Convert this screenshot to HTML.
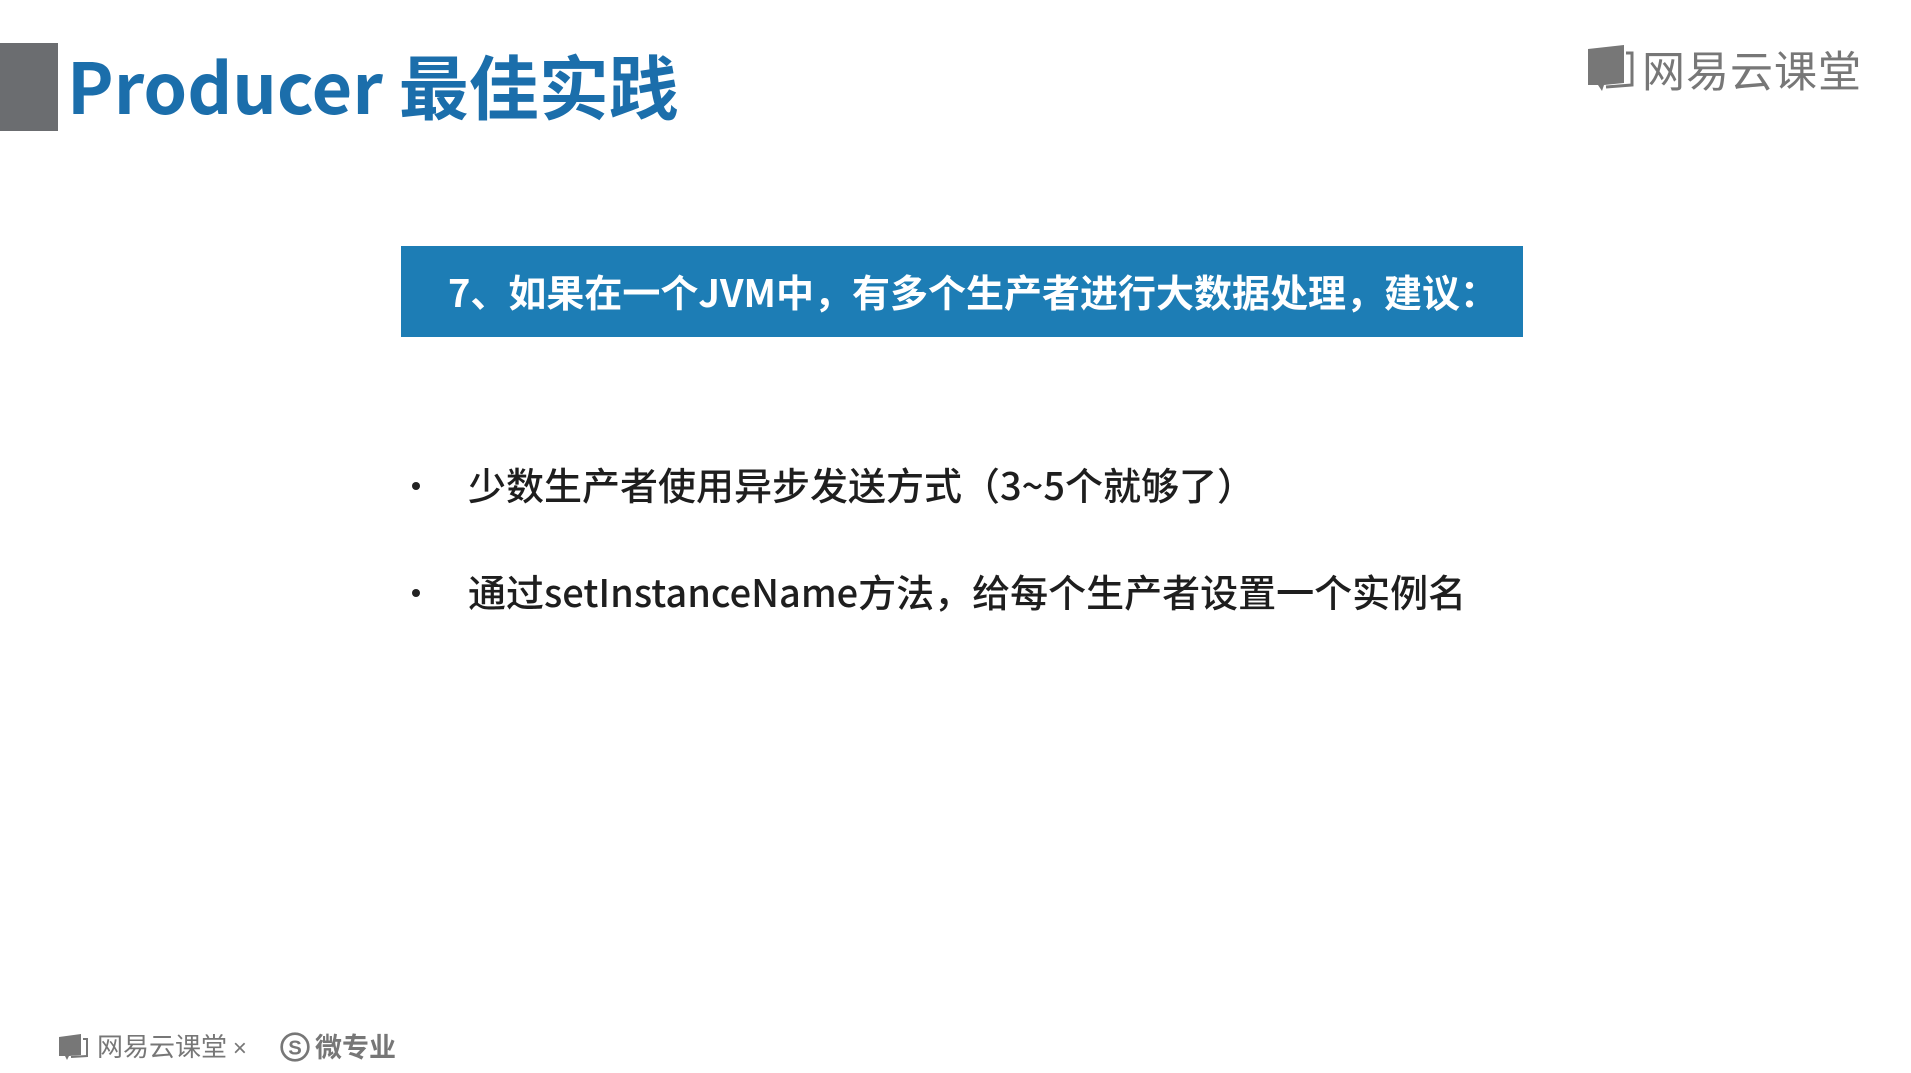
<!DOCTYPE html>
<html><head><meta charset="utf-8"><style>
html,body{margin:0;padding:0;width:1911px;height:1073px;background:#fff;overflow:hidden;position:relative;font-family:"Liberation Sans","Noto Sans CJK SC",sans-serif}
.bar{position:absolute;left:0;top:43px;width:58px;height:88px;background:#6b6d70}
.title{position:absolute;left:67px;top:40px;font-size:70px;font-weight:bold;color:#1b6eab;line-height:90px;white-space:nowrap;font-family:"Noto Sans CJK SC",sans-serif}
.box{position:absolute;left:401px;top:246px;width:1122px;height:91px;background:#1d7db5;color:#fff;font-size:38px;font-weight:bold;line-height:89px;white-space:nowrap;font-family:"Noto Sans CJK SC",sans-serif}
.box span{position:absolute;left:47px}
.li{position:absolute;left:468px;font-size:38px;color:#1e1e1e;white-space:nowrap;line-height:50px;font-family:"Noto Sans CJK SC",sans-serif;font-weight:500}
.dot{position:absolute;left:412px;width:8px;height:8px;border-radius:50%;background:#222}
.logo{position:absolute;color:#777;white-space:nowrap;font-family:"Noto Sans CJK SC",sans-serif}
</style></head><body>
<div class="bar"></div>
<div class="title">Producer 最佳实践</div>
<div class="box"><span>7、如果在一个JVM中，有多个生产者进行大数据处理，建议：</span></div>
<div class="dot" style="top:482px"></div>
<div class="li" style="top:459px">少数生产者使用异步发送方式（3~5个就够了）</div>
<div class="dot" style="top:589px"></div>
<div class="li" style="top:566px">通过setInstanceName方法，给每个生产者设置一个实例名</div>
<svg style="position:absolute;left:1586px;top:43px" width="48" height="50" viewBox="0 0 48 50"><path d="M2 6 L38 2 L38 40 L18 42 L16 48 L12 42 L2 42Z" fill="#777"/><path d="M40 10 L46 10 L46 42 L20 44" fill="none" stroke="#777" stroke-width="3"/></svg>
<div class="logo" style="left:1642px;top:42px;font-size:43px;line-height:54px;letter-spacing:1px">网易云课堂</div>
<svg style="position:absolute;left:58px;top:1033px" width="30" height="28" viewBox="0 0 30 28"><path d="M1 4 L23 1 L23 22 L11 23 L9 27 L7 23 L1 23Z" fill="#777"/><path d="M25 6 L29 6 L29 23 L13 24" fill="none" stroke="#777" stroke-width="2"/></svg>
<div class="logo" style="left:97px;top:1029px;font-size:26px;line-height:34px">网易云课堂 <span style="font-size:24px;font-family:'Liberation Sans'">×</span></div>
<svg style="position:absolute;left:279px;top:1031px" width="32" height="32" viewBox="0 0 30 30"><circle cx="15" cy="15" r="12.5" fill="none" stroke="#777" stroke-width="2.5"/><text x="15" y="22" text-anchor="middle" font-size="19" font-weight="bold" fill="#777" font-family="Liberation Sans">S</text></svg>
<div class="logo" style="left:315px;top:1029px;font-size:27px;line-height:34px;font-weight:bold">微专业</div>
</body></html>
